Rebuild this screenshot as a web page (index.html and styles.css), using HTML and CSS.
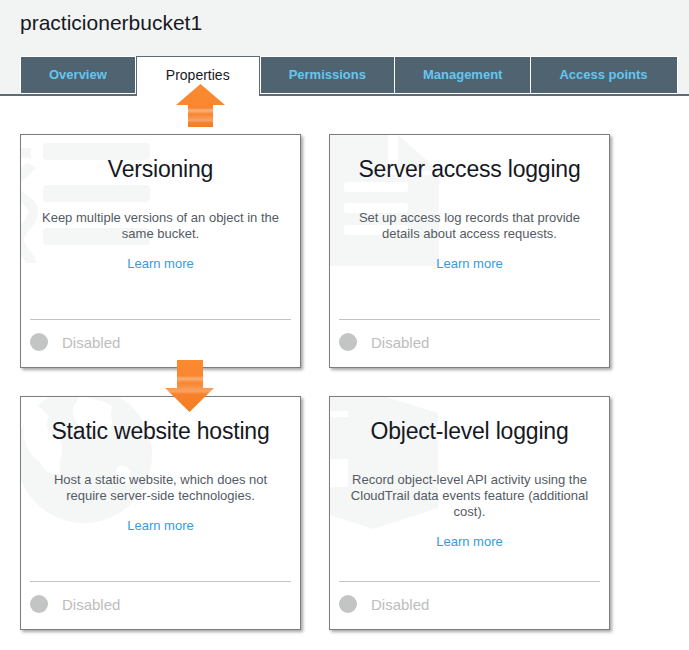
FILE: index.html
```html
<!DOCTYPE html>
<html lang="en">
<head>
<meta charset="utf-8">
<title>practicionerbucket1 - Properties</title>
<link rel="stylesheet" href="styles.css">
</head>
<body>
<div class="page">
  <header class="header">
    <h1 class="bucket-title">practicionerbucket1</h1>
    <nav class="tabs">
      <a class="tab">Overview</a>
      <a class="tab tab-active">Properties</a>
      <a class="tab">Permissions</a>
      <a class="tab">Management</a>
      <a class="tab">Access points</a>
    </nav>
  </header>

  <main class="cards">
    <section class="card">
      <svg class="wm" width="140" height="140" viewBox="0 0 140 140">
        <rect x="22" y="8" width="107" height="17" rx="4" class="wm-fill"/>
        <rect x="22" y="50" width="107" height="17" rx="4" class="wm-fill"/>
        <rect x="22" y="93" width="107" height="17" rx="4" class="wm-fill"/>
        <path d="M-4 18 H10 M10 30 C4 40 -6 40 -6 52 C-6 64 12 64 12 76 C12 90 -2 94 -2 104 C-2 116 10 120 10 128" class="wm-stroke"/>
      </svg>
      <div class="card-body">
        <h2 class="card-title">Versioning</h2>
        <p class="card-desc">Keep multiple versions of an object in the same bucket.</p>
        <a class="learn">Learn more</a>
      </div>
      <div class="card-footer">
        <span class="dot"></span>
        <span class="status">Disabled</span>
      </div>
    </section>

    <section class="card">
      <svg class="wm" width="140" height="140" viewBox="0 0 140 140">
        <path d="M0 0 H58 V40 H109 V131 H0 Z" class="wm-fill"/>
        <path d="M68 0 L109 36 H68 Z" class="wm-fill"/>
        <rect x="14" y="47" width="64" height="10" rx="3" fill="#fff"/>
        <rect x="14" y="68" width="64" height="10" rx="3" fill="#fff"/>
        <rect x="14" y="90" width="64" height="10" rx="3" fill="#fff"/>
      </svg>
      <div class="card-body">
        <h2 class="card-title">Server access logging</h2>
        <p class="card-desc">Set up access log records that provide details about access requests.</p>
        <a class="learn">Learn more</a>
      </div>
      <div class="card-footer">
        <span class="dot"></span>
        <span class="status">Disabled</span>
      </div>
    </section>

    <section class="card">
      <svg class="wm" width="140" height="140" viewBox="0 0 140 140">
        <circle cx="63" cy="58" r="68" class="wm-fill"/>
        <path d="M60 -2 C72 4 84 2 92 10 C86 18 96 26 88 34 C78 30 70 40 62 34 C56 26 50 20 52 10 Z" fill="#fff"/>
        <path d="M4 8 C14 4 22 12 28 20 C22 30 30 40 40 44 C44 56 36 64 40 76 C32 80 22 74 18 64 C10 60 6 50 2 40 Z" fill="#fff"/>
        <path d="M96 70 C104 66 112 72 110 82 C106 90 98 88 94 80 Z" fill="#fff"/>
      </svg>
      <div class="card-body">
        <h2 class="card-title">Static website hosting</h2>
        <p class="card-desc">Host a static website, which does not require server-side technologies.</p>
        <a class="learn">Learn more</a>
      </div>
      <div class="card-footer">
        <span class="dot"></span>
        <span class="status">Disabled</span>
      </div>
    </section>

    <section class="card">
      <svg class="wm" width="140" height="140" viewBox="0 0 140 140">
        <path d="M18 -12 L108 16 V111 L43 132 L0 118 V-12 Z" class="wm-fill"/>
        <rect x="0" y="14" width="18" height="6" fill="#fff"/>
        <rect x="0" y="62" width="18" height="28" fill="#fff"/>
      </svg>
      <div class="card-body">
        <h2 class="card-title">Object-level logging</h2>
        <p class="card-desc">Record object-level API activity using the CloudTrail data events feature (additional cost).</p>
        <a class="learn">Learn more</a>
      </div>
      <div class="card-footer">
        <span class="dot"></span>
        <span class="status">Disabled</span>
      </div>
    </section>
  </main>

  <svg class="arrow arrow-up" width="50" height="44" viewBox="0 0 50 44">
    <defs>
      <linearGradient id="og1" x1="0" y1="0" x2="0" y2="1">
        <stop offset="0" stop-color="#fb8a30"/>
        <stop offset="0.55" stop-color="#f98631"/>
        <stop offset="0.62" stop-color="#fcb27a"/>
        <stop offset="0.7" stop-color="#f8852e"/>
        <stop offset="0.85" stop-color="#f9a264"/>
        <stop offset="0.9" stop-color="#f7822b"/>
        <stop offset="1" stop-color="#f47d22"/>
      </linearGradient>
    </defs>
    <polygon points="24.5,0 49,21 37,21 37,43 12,43 12,21 0,21" fill="url(#og1)"/>
  </svg>

  <svg class="arrow arrow-down" width="50" height="53" viewBox="0 0 50 53">
    <defs>
      <linearGradient id="og2" x1="0" y1="0" x2="0" y2="1">
        <stop offset="0" stop-color="#fb8a30"/>
        <stop offset="0.3" stop-color="#f98631"/>
        <stop offset="0.36" stop-color="#fcae74"/>
        <stop offset="0.44" stop-color="#f8852e"/>
        <stop offset="0.6" stop-color="#f9a264"/>
        <stop offset="0.66" stop-color="#f7822b"/>
        <stop offset="1" stop-color="#f47d22"/>
      </linearGradient>
    </defs>
    <polygon points="12,0 38,0 38,28 49,28 24.5,52 0,28 12,28" fill="url(#og2)"/>
  </svg>
</div>
</body>
</html>
```

FILE: styles.css
```css
html, body {
  margin: 0;
  padding: 0;
  background: #ffffff;
}

body {
  font-family: "Liberation Sans", Arial, sans-serif;
  color: #16191f;
}

.page {
  position: relative;
  width: 689px;
  min-height: 650px;
}

.header {
  background: #f2f3f3;
  padding-top: 11px;
}

.bucket-title {
  margin: 0 0 21px 20px;
  font-size: 21px;
  line-height: 24px;
  font-weight: normal;
  color: #16191f;
}

.tabs {
  display: flex;
  align-items: flex-end;
  padding-left: 20px;
  border-bottom: 2px solid #5f6a74;
  height: 38px;
}

.tab {
  display: flex;
  align-items: center;
  box-sizing: border-box;
  height: 38px;
  padding: 0 28px 2px;
  margin-right: -1px;
  background: #4f6371;
  border: 1px solid #ffffff;
  color: #66c6ef;
  font-size: 13px;
  font-weight: bold;
  white-space: nowrap;
}

.tab:last-child {
  padding-right: 29px;
}

.tab-active {
  position: relative;
  z-index: 1;
  height: 40px;
  margin-bottom: -2px;
  margin-left: 1px;
  margin-right: 0;
  padding: 0 29px 4px;
  background: #ffffff;
  border: 1px solid #5f6a74;
  border-bottom: none;
  color: #16191f;
  font-size: 14px;
  font-weight: normal;
}

.cards {
  display: grid;
  grid-template-columns: 281px 281px;
  grid-auto-rows: 234px;
  gap: 28px;
  padding: 38px 20px 0;
}

.card {
  position: relative;
  overflow: hidden;
  box-sizing: border-box;
  display: flex;
  flex-direction: column;
  background: #ffffff;
  border: 1px solid #7d7d7d;
  box-shadow: 2px 2px 3px rgba(0, 0, 0, 0.35);
}

.wm {
  position: absolute;
  left: 0;
  top: 0;
  z-index: 0;
}

.wm-fill {
  fill: #f5f6f6;
}

.wm-stroke {
  fill: none;
  stroke: #f5f6f6;
  stroke-width: 10;
}

.card-body {
  position: relative;
  z-index: 1;
  box-sizing: border-box;
  height: 184px;
  flex: 0 0 184px;
  padding: 20px 19px 0;
  text-align: center;
}

.card-title {
  margin: 0;
  font-size: 23px;
  letter-spacing: -0.2px;
  line-height: 28px;
  font-weight: normal;
  color: #16191f;
}

.card-desc {
  margin: 27px 0 0;
  font-size: 13px;
  line-height: 16px;
  color: #545b64;
}

.learn {
  display: block;
  margin-top: 14px;
  font-size: 13px;
  line-height: 16px;
  color: #3b9ad9;
}

.card-footer {
  position: relative;
  z-index: 1;
  flex: 1;
  display: flex;
  align-items: center;
  gap: 14px;
  margin: 0 9px;
  padding-bottom: 3px;
  border-top: 1px solid #c3c3c3;
}

.dot {
  width: 18px;
  height: 18px;
  border-radius: 50%;
  background: #c3c4c4;
}

.status {
  font-size: 15px;
  color: #bcbdbe;
}

.arrow {
  position: absolute;
  z-index: 5;
}

.arrow-up {
  left: 176px;
  top: 84px;
}

.arrow-down {
  left: 165px;
  top: 360px;
}
```
